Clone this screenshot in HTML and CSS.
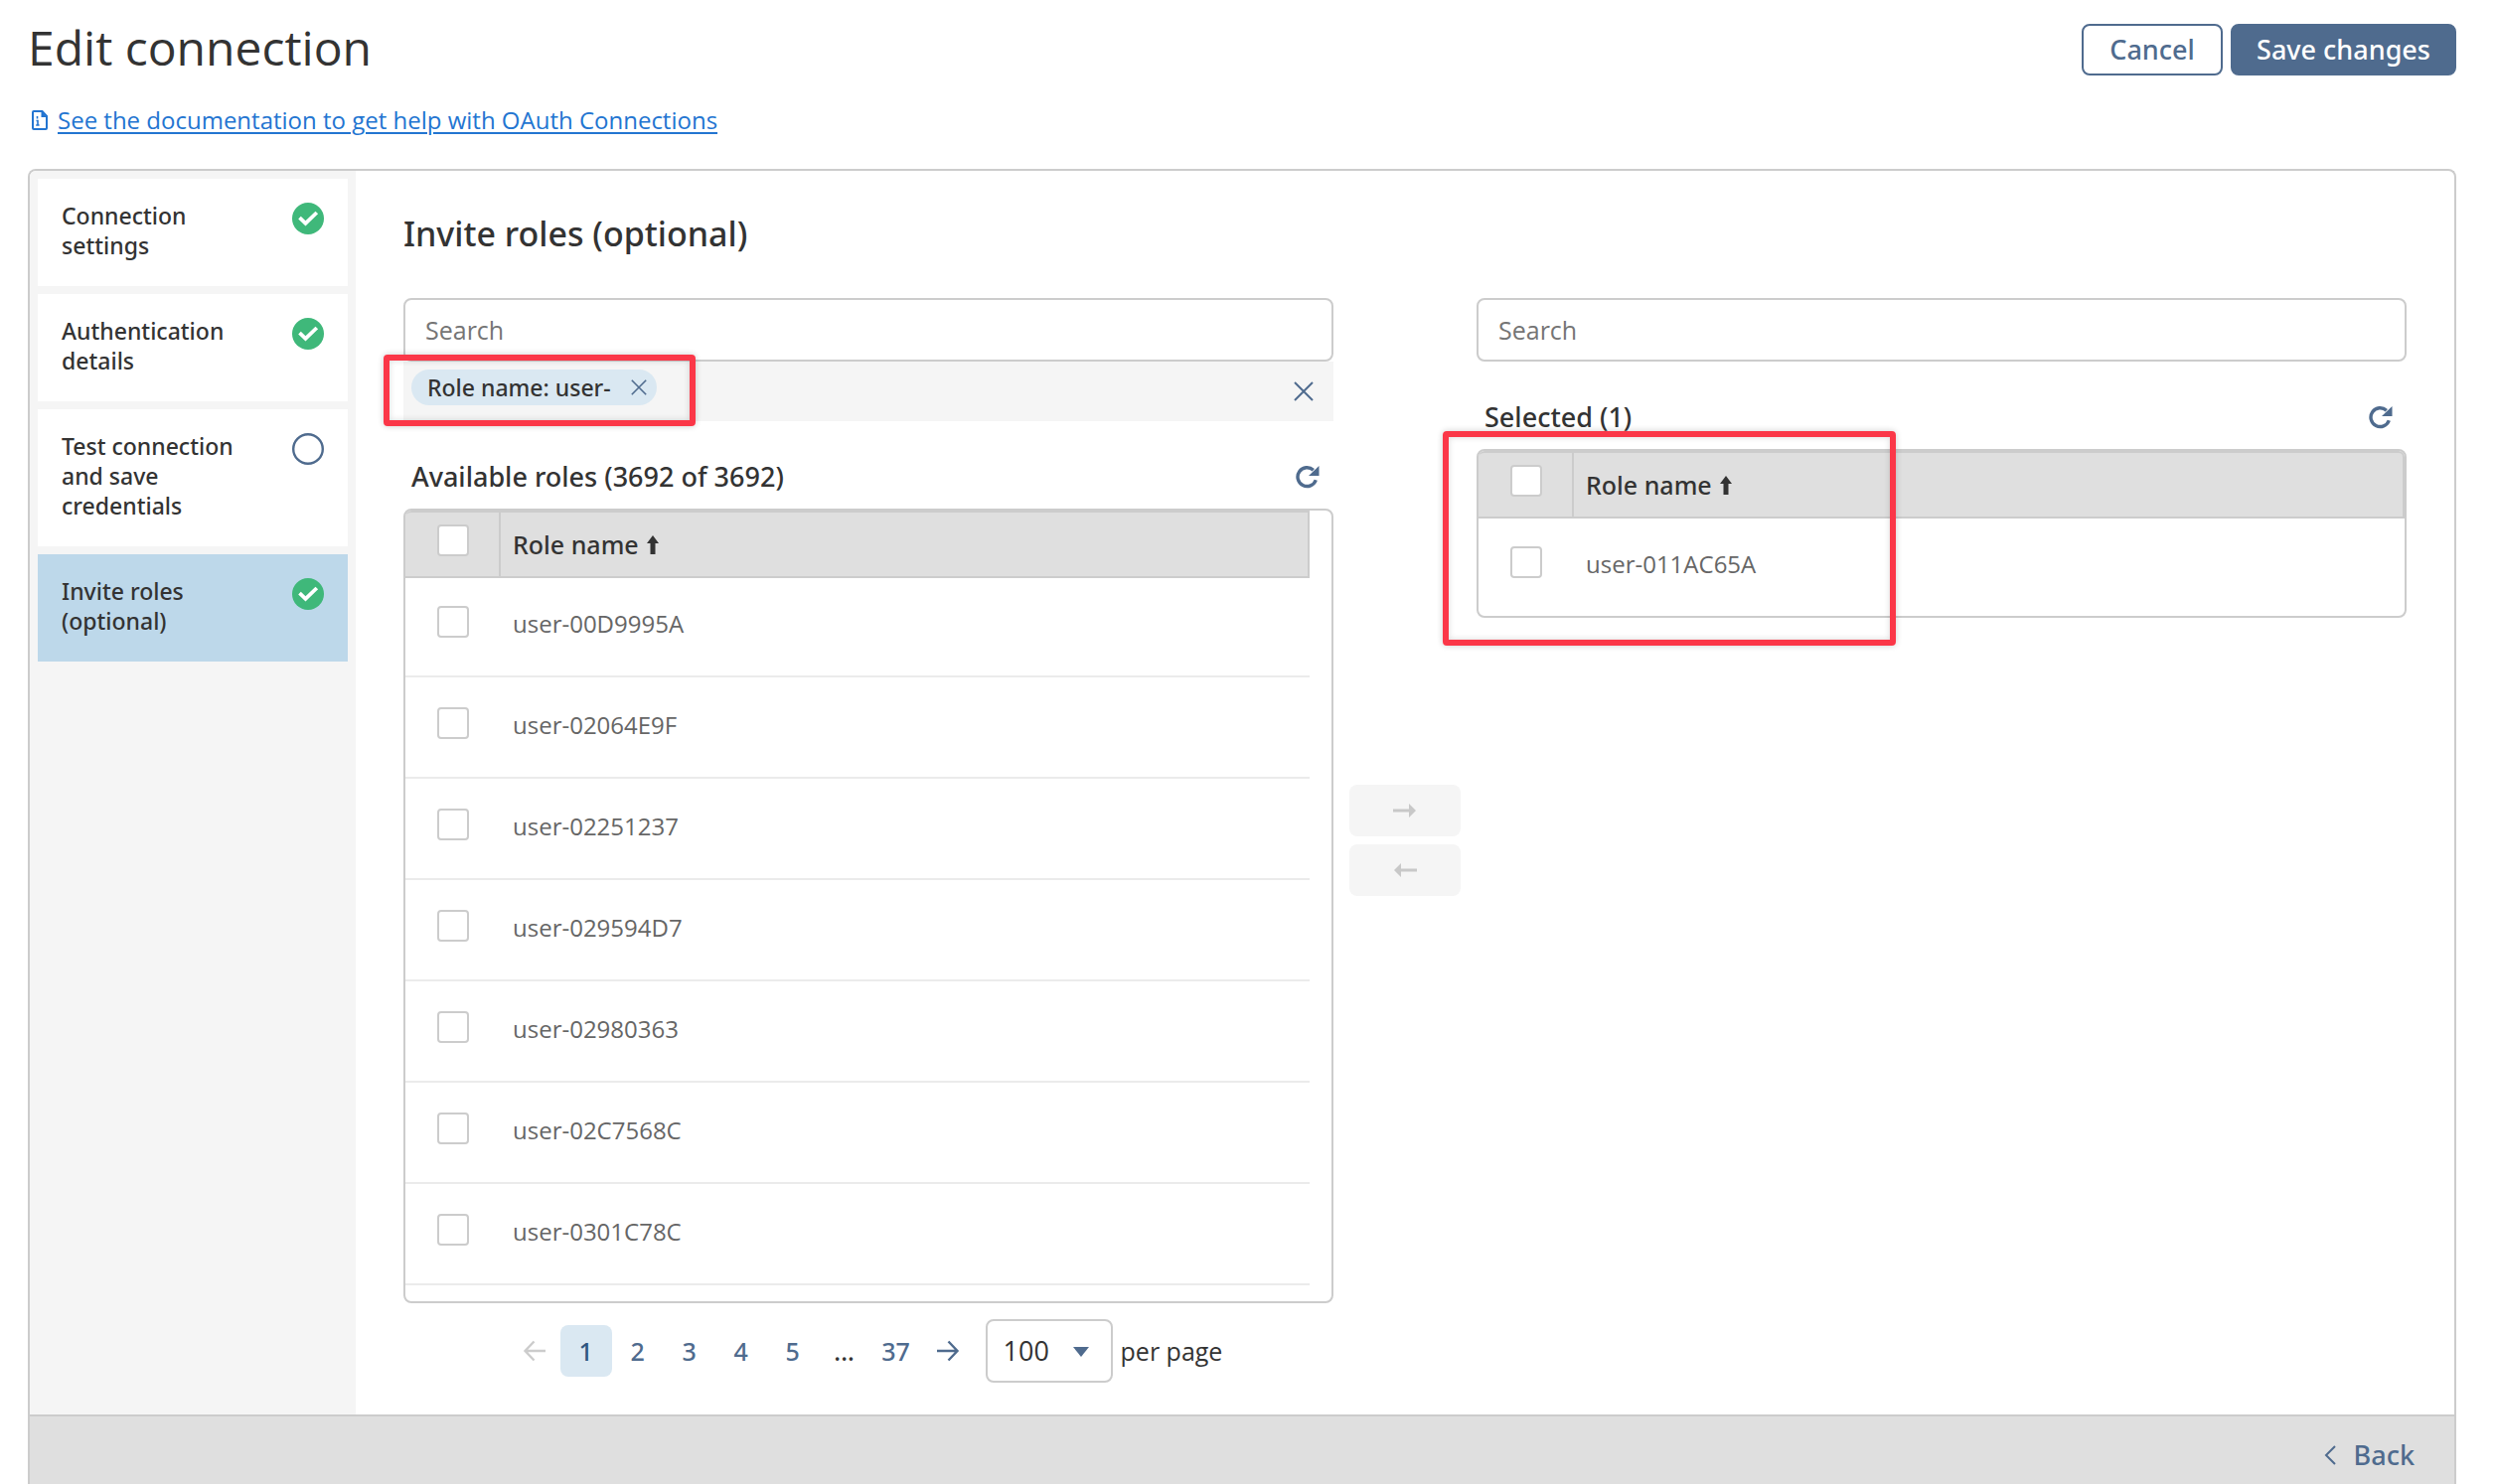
FILE: index.html
```html
<!DOCTYPE html>
<html lang="en">
<head>
<meta charset="utf-8">
<title>Edit connection</title>
<link rel="stylesheet" href="styles.css">
</head>
<body>
<svg class="sprite" aria-hidden="true">
  <symbol id="check" viewBox="0 0 32 32"><circle cx="16" cy="16" r="16" fill="#3fb87a"/><path d="M7.500 15.200l6 5.600L24.800 10" fill="none" stroke="#fff" stroke-width="3.800"/></symbol>
  <symbol id="ring" viewBox="0 0 32 32"><circle cx="16" cy="16" r="14.800" fill="none" stroke="#4f6b8e" stroke-width="2.400"/></symbol>
  <symbol id="close" viewBox="0 0 20 20"><path d="M1 1l18 18M19 1L1 19" fill="none" stroke="currentColor" stroke-width="2"/></symbol>
  <symbol id="refresh" viewBox="0 0 24 24"><path d="M20.300 15.200A9.400 9.400 0 1 1 17.800 5.200" fill="none" stroke="currentColor" stroke-width="3.400"/><path d="M23.500 1v10H13z" fill="currentColor"/></symbol>
  <symbol id="sort" viewBox="0 0 12 20"><path d="M6 0l6 8H8.500v11h-5V8H0z" fill="currentColor"/></symbol>
  <symbol id="move" viewBox="0 0 24 16"><path d="M0 6.500h16V1l7 7-7 7V9.500H0z" fill="currentColor"/></symbol>
  <symbol id="arrow" viewBox="0 0 24 24"><path d="M1 12h20M12.500 2.500L21.500 12l-9 9.500" fill="none" stroke="currentColor" stroke-width="2.400"/></symbol>
</svg>
<div class="page">
  <header class="header">
    <h1 class="title">Edit connection</h1>
    <div class="actions">
      <button class="btn btn-outline" type="button">Cancel</button>
      <button class="btn btn-primary" type="button">Save changes</button>
    </div>
  </header>
  <p class="help">
    <svg class="doc-icon" viewBox="0 0 16 20" aria-hidden="true"><path d="M1 2a1 1 0 0 1 1-1h8.500L15 6v12a1 1 0 0 1-1 1H2a1 1 0 0 1-1-1z" fill="none" stroke="currentColor" stroke-width="2"/><path d="M9.500 1v6H15l-5-6z" fill="currentColor"/><path d="M5.500 6v2.400M4.500 10.500h1.500V15M4.200 15h3.400" fill="none" stroke="currentColor" stroke-width="1.600"/></svg>
    <a class="help-link" href="#docs">See the documentation to get help with OAuth Connections</a>
  </p>
  <div class="card">
    <div class="card-body">
      <nav class="steps" aria-label="Steps">
        <a class="step" href="#settings"><span>Connection settings</span><svg class="step-icon"><use href="#check"/></svg></a>
        <a class="step" href="#auth"><span>Authentication details</span><svg class="step-icon"><use href="#check"/></svg></a>
        <a class="step" href="#test"><span>Test connection and save credentials</span><svg class="step-icon"><use href="#ring"/></svg></a>
        <a class="step step-active" href="#roles" aria-current="step"><span>Invite roles (optional)</span><svg class="step-icon"><use href="#check"/></svg></a>
      </nav>
      <main class="main">
        <h2 class="section-title">Invite roles (optional)</h2>
        <div class="transfer">
          <section class="column">
            <input class="search" type="text" placeholder="Search" aria-label="Search available roles">
            <div class="filters">
              <span class="chip">Role name: user-<button class="chip-close" type="button" aria-label="Remove filter"><svg class="icon-16"><use href="#close"/></svg></button></span>
              <button class="clear" type="button" aria-label="Clear filters"><svg class="icon-20"><use href="#close"/></svg></button>
              <span class="highlight highlight-filter"></span>
            </div>
            <div class="list-head">
              <h3 class="list-title">Available roles (3692 of 3692)</h3>
              <button class="refresh" type="button" aria-label="Refresh available roles"><svg class="icon-24"><use href="#refresh"/></svg></button>
            </div>
            <div class="panel panel-scroll">
              <table class="roles">
                <thead><tr><th class="pick"><input class="box" type="checkbox" aria-label="Select all available roles"></th><th class="name">Role name <svg class="sort-icon"><use href="#sort"/></svg></th></tr></thead>
                <tbody>
                  <tr><td class="pick"><input class="box" type="checkbox" id="r1"></td><td class="name"><label for="r1">user-00D9995A</label></td></tr>
                  <tr><td class="pick"><input class="box" type="checkbox" id="r2"></td><td class="name"><label for="r2">user-02064E9F</label></td></tr>
                  <tr><td class="pick"><input class="box" type="checkbox" id="r3"></td><td class="name"><label for="r3">user-02251237</label></td></tr>
                  <tr><td class="pick"><input class="box" type="checkbox" id="r4"></td><td class="name"><label for="r4">user-029594D7</label></td></tr>
                  <tr><td class="pick"><input class="box" type="checkbox" id="r5"></td><td class="name"><label for="r5">user-02980363</label></td></tr>
                  <tr><td class="pick"><input class="box" type="checkbox" id="r6"></td><td class="name"><label for="r6">user-02C7568C</label></td></tr>
                  <tr><td class="pick"><input class="box" type="checkbox" id="r7"></td><td class="name"><label for="r7">user-0301C78C</label></td></tr>
                </tbody>
              </table>
            </div>
            <div class="pagination">
              <button class="page-btn" type="button" disabled aria-label="Previous page"><svg class="icon-24 flip"><use href="#arrow"/></svg></button>
              <button class="page-btn page-current" type="button" aria-current="page">1</button>
              <button class="page-btn" type="button">2</button>
              <button class="page-btn" type="button">3</button>
              <button class="page-btn" type="button">4</button>
              <button class="page-btn" type="button">5</button>
              <span class="page-btn page-gap">...</span>
              <button class="page-btn" type="button">37</button>
              <button class="page-btn" type="button" aria-label="Next page"><svg class="icon-24"><use href="#arrow"/></svg></button>
              <div class="size">
                <select class="size-select" id="size"><option>100</option></select>
                <svg class="caret" viewBox="0 0 16 10" aria-hidden="true"><path d="M0 0h16L8 10z" fill="#4f6b8e"/></svg>
              </div>
              <label class="size-label" for="size">per page</label>
            </div>
          </section>
          <div class="movers">
            <button class="mover" type="button" disabled aria-label="Add selected roles"><svg class="move-icon"><use href="#move"/></svg></button>
            <button class="mover" type="button" disabled aria-label="Remove selected roles"><svg class="move-icon flip"><use href="#move"/></svg></button>
          </div>
          <section class="column">
            <input class="search" type="text" placeholder="Search" aria-label="Search selected roles">
            <div class="list-head">
              <h3 class="list-title">Selected (1)</h3>
              <button class="refresh" type="button" aria-label="Refresh selected roles"><svg class="icon-24"><use href="#refresh"/></svg></button>
            </div>
            <div class="panel">
              <table class="roles">
                <thead><tr><th class="pick"><input class="box" type="checkbox" aria-label="Select all selected roles"></th><th class="name">Role name <svg class="sort-icon"><use href="#sort"/></svg></th></tr></thead>
                <tbody>
                  <tr><td class="pick"><input class="box" type="checkbox" id="s1"></td><td class="name"><label for="s1">user-011AC65A</label></td></tr>
                </tbody>
              </table>
              <span class="highlight highlight-selected"></span>
            </div>
          </section>
        </div>
      </main>
    </div>
    <footer class="footer">
      <button class="back" type="button"><svg class="chevron" viewBox="0 0 12 20" aria-hidden="true"><path d="M11 1L2 10l9 9" fill="none" stroke="currentColor" stroke-width="2"/></svg>Back</button>
    </footer>
  </div>
</div>
</body>
</html>
```
FILE: styles.css
```css
* { box-sizing: border-box; }

body {
  margin: 0;
  background: #fff;
  color: #333;
  font-family: "Open Sans", "Noto Sans", sans-serif;
  font-size: 24px;
  line-height: 30px;
}

h1, h2, h3, p { margin: 0; font-weight: 400; }
svg { display: block; flex: none; }
button, input, select { font: inherit; color: inherit; margin: 0; }
button { display: flex; align-items: center; justify-content: center; padding: 0; border: 0; background: none; color: #4f6b8e; }

.sprite { position: absolute; width: 0; height: 0; }
.icon-16 { width: 16px; height: 16px; }
.icon-20 { width: 20px; height: 20px; }
.icon-24 { width: 24px; height: 24px; }
.flip { transform: scaleX(-1); }

.page { display: flex; flex-direction: column; min-height: 100vh; padding: 20px 40px 0 28px; }

.header { display: flex; justify-content: space-between; align-items: flex-start; }
.title { font-size: 48px; line-height: 56px; }
.actions { display: flex; gap: 8px; padding-top: 4px; }
.btn, .section-title, .list-title, .step, .chip, .roles th, .page-btn, .back {
  font-family: "Noto Sans", "Open Sans", sans-serif;
  font-weight: 500;
}
.btn { height: 52px; min-width: 142px; padding: 0 24px; border: 2px solid #4f6b8e; border-radius: 8px; font-size: 27px; }
.btn-primary { background: #4f6b8e; color: #fff; }

.help { display: flex; align-items: center; gap: 10px; padding: 30px 4px 34px; color: #2375d1; }
.doc-icon { width: 16px; height: 20px; }
.help-link { color: inherit; text-decoration-thickness: 2px; text-underline-offset: 3px; }

.card { flex: 1; display: flex; flex-direction: column; border: 2px solid #ccc; border-bottom: 0; border-radius: 8px 8px 0 0; }
.card-body { display: flex; }

.steps { flex: none; display: flex; flex-direction: column; gap: 8px; width: 328px; padding: 8px; background: #f5f5f5; border-radius: 6px 0 0 0; }
.step { display: flex; justify-content: space-between; align-items: flex-start; gap: 32px; padding: 22px 24px 26px; background: #fff; color: #333; font-size: 23px; text-decoration: none; }
.step-active { background: #bdd8ea; }
.step-icon { width: 32px; height: 32px; margin-top: 2px; }

.main { flex: 1; min-width: 0; padding: 40px 48px 32px; }
.section-title { margin-bottom: 42px; font-size: 34px; line-height: 46px; }
.transfer { display: flex; gap: 16px; }
.column { flex: 1; min-width: 0; }

.search { display: block; width: 100%; height: 64px; padding: 0 20px; border: 2px solid #ccc; border-radius: 8px; background: #fff; font-size: 25px; }
.search::placeholder { color: #757575; opacity: 1; }

.filters { position: relative; display: flex; justify-content: space-between; align-items: flex-start; padding: 8px; height: 60px; background: #f5f5f5; }
.chip { display: flex; align-items: center; gap: 20px; height: 36px; padding: 0 10px 0 16px; border-radius: 18px; background: #dae8f2; font-size: 23px; line-height: 34px; }
.clear { height: 44px; padding: 0 12px; }

.highlight { position: absolute; border: 6px solid #fb3748; border-radius: 4px; box-shadow: 0 0 6px rgba(0, 0, 0, 0.2), inset 0 0 6px rgba(0, 0, 0, 0.15); pointer-events: none; }
.highlight-filter { left: -20px; top: -7px; width: 314px; height: 72px; }
.highlight-selected { left: -36px; top: -20px; width: 456px; height: 216px; }

.list-head { display: flex; justify-content: space-between; align-items: center; height: 48px; margin: 32px 0 8px; padding: 0 14px 0 8px; }
.list-title { font-size: 27px; }

.panel { position: relative; border: 2px solid #ccc; border-radius: 8px; }
.panel-scroll { padding: 0 22px 16px 0; }
.roles { width: 100%; border-collapse: separate; border-spacing: 0; table-layout: fixed; }
.roles th, .roles td { padding: 0; text-align: left; vertical-align: top; }
.roles .pick { width: 96px; padding-left: 32px; }
.roles .name { padding-left: 12px; }
.roles th { height: 68px; padding-top: 12px; border-top: 2px solid #ccc; border-right: 2px solid #ccc; border-bottom: 2px solid #ccc; background: #dfdfdf; font-size: 25px; line-height: 40px; }
.roles th:first-child { border-top-left-radius: 6px; }
.panel:not(.panel-scroll) th:last-child { border-top-right-radius: 6px; }
.roles td { height: 102px; padding-top: 30px; border-bottom: 2px solid #ebebeb; color: #666; line-height: 36px; }
.roles tr:first-child td { height: 100px; padding-top: 28px; }
.panel:not(.panel-scroll) tr:first-child td { height: 98px; border-bottom: 0; }
.box { display: block; appearance: none; width: 32px; height: 32px; border: 2px solid #ccc; border-radius: 4px; background: #fff; }
.sort-icon { display: inline-block; width: 12px; height: 20px; margin-left: 2px; vertical-align: -1px; }

.pagination { display: flex; justify-content: center; align-items: center; padding-top: 16px; }
.page-btn { display: flex; align-items: center; justify-content: center; width: 52px; height: 52px; border-radius: 8px; font-size: 25px; }
.page-btn:disabled { color: #ccc; }
.page-current { background: #dae8f2; color: #2f5680; }
.page-gap { color: #333; }
.size { position: relative; margin-left: 12px; }
.size-select { display: block; appearance: none; width: 128px; height: 64px; padding: 0 16px; border: 2px solid #ccc; border-radius: 8px; background: #fff; font-size: 27px; }
.caret { position: absolute; right: 24px; top: 28px; width: 16px; height: 10px; pointer-events: none; }
.size-label { padding: 0 6px 0 8px; font-size: 25px; }

.movers { display: flex; flex-direction: column; justify-content: center; gap: 8px; }
.mover { width: 112px; height: 52px; border-radius: 8px; background: #f5f5f5; color: #c8c8c8; }
.move-icon { width: 24px; height: 16px; }

.footer { flex: 1; display: flex; justify-content: flex-end; align-items: flex-start; padding: 24px 40px 0; border-top: 2px solid #ccc; background: #dfdfdf; }
.back { gap: 18px; font-size: 27px; line-height: 30px; }
.chevron { width: 12px; height: 20px; }
```
